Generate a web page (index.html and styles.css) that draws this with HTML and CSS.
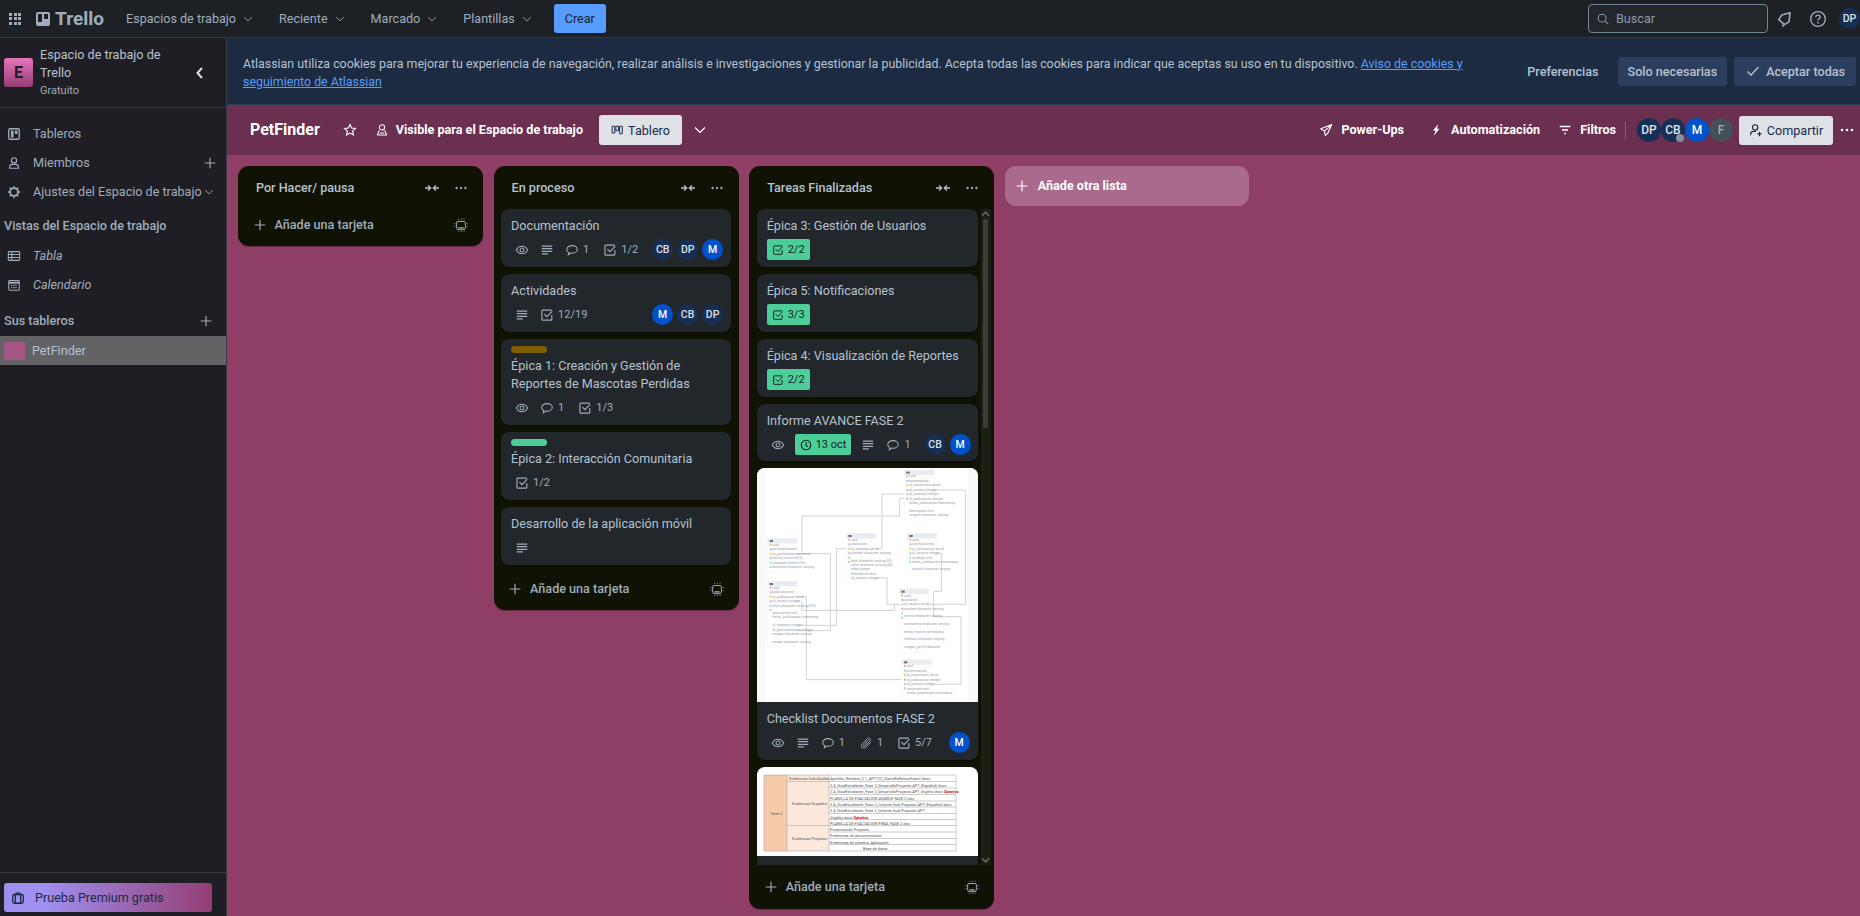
FILE: index.html
```html
<!DOCTYPE html>
<html lang="es">
    <head>
        <title>PetFinder | Trello</title>
        <link rel="stylesheet" href="styles.css">
    </head>
    <body>
        <svg class="icon-defs" width="0" height="0">
            <symbol id="i-chev" viewBox="0 0 16 16"><path d="M3 5.5l5 5 5-5" fill="none" stroke="currentColor" stroke-width="1.2"/></symbol>
            <symbol id="i-plus" viewBox="0 0 16 16"><path d="M8 2v12M2 8h12" fill="none" stroke="currentColor" stroke-width="1.3"/></symbol>
            <symbol id="i-dots" viewBox="0 0 16 16"><circle cx="3" cy="8" r="1.3" fill="currentColor"/><circle cx="8" cy="8" r="1.3" fill="currentColor"/><circle cx="13" cy="8" r="1.3" fill="currentColor"/></symbol>
            <symbol id="i-collapse" viewBox="0 0 16 16"><path d="M0 8h6M3.5 5l3 3-3 3M16 8h-6M12.5 5l-3 3 3 3" fill="none" stroke="currentColor" stroke-width="1.5"/></symbol>
            <symbol id="i-template" viewBox="0 0 16 16"><rect x="3" y="4" width="10" height="9" rx="1.5" fill="none" stroke="currentColor" stroke-width="1.1"/><path d="M5 10.5h6v1.500H5z" fill="currentColor"/><path d="M1 6v1M1 9v1M15 6v1M15 9v1M5 1.500h1M8 1.500h1M11 1.500h1M5 15h1M8 15h1M11 15h1" fill="none" stroke="currentColor" stroke-width="1.200"/></symbol>
            <symbol id="i-eye" viewBox="0 0 16 16"><path d="M1.5 8C3 5.2 5.3 3.8 8 3.8s5 1.4 6.5 4.2c-1.5 2.8-3.8 4.2-6.5 4.2S3 10.800 1.500 8z" fill="none" stroke="currentColor" stroke-width="1.200"/><circle cx="8" cy="8" r="2.200" fill="none" stroke="currentColor" stroke-width="1.200"/></symbol>
            <symbol id="i-desc" viewBox="0 0 16 16"><path d="M2 3.500h12M2 6.500h12M2 9.500h12M2 12.500h7" fill="none" stroke="currentColor" stroke-width="1.400"/></symbol>
            <symbol id="i-comment" viewBox="0 0 16 16"><path d="M8 3c3.500 0 6 1.900 6 4.300s-2.500 4.300-6 4.300c-.6 0-1.100 0-1.600-.1L3.800 13.500l.4-2.800C2.800 9.900 2 8.700 2 7.300 2 4.900 4.500 3 8 3z" fill="none" stroke="currentColor" stroke-width="1.200"/></symbol>
            <symbol id="i-check" viewBox="0 0 16 16"><path d="M13.500 8v5a.8.8 0 0 1-.8.8H3a.8.8 0 0 1-.8-.8V3.300a.8.8 0 0 1 .8-.8h10.500" fill="none" stroke="currentColor" stroke-width="1.300"/><path d="M5 7l3 3 6-6.500" fill="none" stroke="currentColor" stroke-width="1.300"/></symbol>
            <symbol id="i-clock" viewBox="0 0 16 16"><circle cx="8" cy="8" r="6.300" fill="none" stroke="currentColor" stroke-width="1.500"/><path d="M8 4v4.500l2.500 2" fill="none" stroke="currentColor" stroke-width="1.500"/></symbol>
            <symbol id="i-clip" viewBox="0 0 16 16"><path d="M13.500 7l-5.800 5.800c-1.400 1.400-3.300 1.300-4.300.3s-1-2.800.4-4.200l5.700-5.700c1-1 2.300-.9 3-.2s.7 2-.3 3L6.800 11.300c-.5.500-1.200.5-1.500.2s-.3-1 .2-1.500L10.800 4.600" fill="none" stroke="currentColor" stroke-width="1.100"/></symbol>
            <symbol id="i-rocket" viewBox="0 0 16 16"><path d="M14.500 1.800L2 6.500l4.200 2.800 1 4.900 2.800-2.400z M14.500 1.800l-8.300 7.500" fill="none" stroke="currentColor" stroke-width="1.300" stroke-linejoin="round"/></symbol>
            <symbol id="i-bolt" viewBox="0 0 16 16"><path d="M10.500 1.500L4.500 8.500h3L5.500 14.500l6.500-8H9z" fill="currentColor"/></symbol>
            <symbol id="i-filter" viewBox="0 0 16 16"><path d="M2 4h12M4.500 8h7M7 12h2" fill="none" stroke="currentColor" stroke-width="1.500"/></symbol>
            <symbol id="i-person" viewBox="0 0 16 16"><circle cx="8" cy="5" r="3" fill="none" stroke="currentColor" stroke-width="1.300"/><path d="M3 14v-1.500C3 10.600 4.500 9.500 6 9.500h4c1.500 0 3 1.100 3 3V14z" fill="none" stroke="currentColor" stroke-width="1.300"/></symbol>
            <symbol id="i-people" viewBox="0 0 16 16"><circle cx="8" cy="5" r="3" fill="none" stroke="currentColor" stroke-width="1.200"/><path d="M2.500 13.800L5 8.500M13.500 13.800L11 8.500M2.500 13.800h11M5.500 11.500h5" fill="none" stroke="currentColor" stroke-width="1.200"/></symbol>
            <defs>
                <g id="er-keys">
                    <rect x="6" y="8" width="10" height="6" fill="#6b7079"/>
                    <rect x="6" y="19" width="5" height="6" fill="#f2a5a0"/>
                    <rect x="6" y="33" width="7" height="6" fill="#a5cdf2"/>
                    <rect x="6" y="46" width="6" height="6" fill="#f2cf5b"/>
                    <rect x="6" y="60" width="6" height="6" fill="#b8bcc2"/>
                    <rect x="6" y="73" width="5" height="6" fill="#8fdcc0"/>
                    <rect x="6" y="86" width="5" height="6" fill="#8fdcc0"/>
                    <path d="M2 27H86M2 41H86M2 54H86M2 68H86M2 81H86" stroke="#eef0f2" stroke-width="1.500"/>
                </g>
            </defs>
        </svg>

        <header class="topbar">
            <span class="apps-grid"><i></i><i></i><i></i><i></i><i></i><i></i><i></i><i></i><i></i></span>
            <span class="logo"><span class="logo-mark"><i></i><i></i></span>Trello</span>
            <nav class="topnav">
                <a class="topnav-item">Espacios de trabajo <svg class="ic-12"><use href="#i-chev"/></svg></a>
                <a class="topnav-item">Reciente <svg class="ic-12"><use href="#i-chev"/></svg></a>
                <a class="topnav-item">Marcado <svg class="ic-12"><use href="#i-chev"/></svg></a>
                <a class="topnav-item">Plantillas <svg class="ic-12"><use href="#i-chev"/></svg></a>
            </nav>
            <button class="create-btn">Crear</button>
            <div class="search">
                <svg class="ic-14" viewBox="0 0 16 16"><circle cx="7" cy="7" r="4.500" fill="none" stroke="currentColor" stroke-width="1.200"/><path d="M10.500 10.500L14 14" stroke="currentColor" stroke-width="1.200"/></svg>
                <span>Buscar</span>
            </div>
            <svg class="top-icon bell" viewBox="0 0 16 16"><path d="M12.500 2.500L5 4.500 2.500 8.500l5 4.500 4-2.500z" fill="none" stroke="currentColor" stroke-width="1.400" stroke-linejoin="round"/><path d="M5.500 13.500l1.500 1" stroke="currentColor" stroke-width="1.400"/></svg>
            <svg class="top-icon help" viewBox="0 0 16 16"><circle cx="8" cy="8" r="6.500" fill="none" stroke="currentColor" stroke-width="1.200"/><path d="M6 6.300C6 5 7 4.500 8 4.500s2 .6 2 1.800c0 1.500-2 1.500-2 3" fill="none" stroke="currentColor" stroke-width="1.200"/><circle cx="8" cy="11.300" r=".8" fill="currentColor"/></svg>
            <span class="avatar avatar-top navy">DP</span>
        </header>

        <div class="main">
            <aside class="sidebar">
                <div class="ws-head">
                    <span class="ws-tile">E</span>
                    <div class="ws-info">
                        <div class="ws-name">Espacio de trabajo de Trello</div>
                        <div class="ws-plan">Gratuito</div>
                    </div>
                    <svg class="ws-back" viewBox="0 0 16 16"><path d="M10 3L5.500 8l4.500 5" fill="none" stroke="currentColor" stroke-width="2"/></svg>
                </div>
                <div class="side-nav">
                    <div class="side-row">
                        <svg class="ic-14" viewBox="0 0 16 16"><rect x="2" y="2" width="12" height="12" rx="1.500" fill="none" stroke="currentColor" stroke-width="1.500"/><path d="M4.500 4h3v8h-3zM9 4h3v4H9z" fill="currentColor"/></svg>
                        <span>Tableros</span>
                    </div>
                    <div class="side-row">
                        <svg class="ic-14"><use href="#i-person"/></svg>
                        <span>Miembros</span>
                        <svg class="ic-14 side-end"><use href="#i-plus"/></svg>
                    </div>
                    <div class="side-row">
                        <svg class="ic-14" viewBox="0 0 16 16"><circle cx="8" cy="8" r="4.500" fill="none" stroke="currentColor" stroke-width="2"/><path d="M8 1v2M8 13v2M1 8h2M13 8h2M3 3l1.500 1.500M13 13l-1.500-1.500M13 3l-1.500 1.500M3 13l1.500-1.500" stroke="currentColor" stroke-width="1.500"/></svg>
                        <span class="side-nowrap">Ajustes del Espacio de trabajo</span>
                        <svg class="ic-12 side-end-tight"><use href="#i-chev"/></svg>
                    </div>
                </div>
                <div class="side-title views-title">Vistas del Espacio de trabajo</div>
                <div class="side-row side-em">
                    <svg class="ic-14" viewBox="0 0 16 16"><rect x="1.500" y="3" width="13" height="10" rx="1" fill="none" stroke="currentColor" stroke-width="1.200"/><path d="M1.500 6.300h13M1.500 9.600h13M5.500 3v10" stroke="currentColor" stroke-width="1.200"/></svg>
                    <span>Tabla</span>
                </div>
                <div class="side-row side-em">
                    <svg class="ic-14" viewBox="0 0 16 16"><rect x="2" y="3" width="12" height="11" rx="1" fill="none" stroke="currentColor" stroke-width="1.200"/><path d="M2 5.500h12" stroke="currentColor" stroke-width="2"/><path d="M4.500 8.500h7M4.500 11h7" stroke="currentColor" stroke-width="1.500" stroke-dasharray="1.500 1"/></svg>
                    <span>Calendario</span>
                </div>
                <div class="side-title boards-title">
                    <span>Sus tableros</span>
                    <svg class="ic-14"><use href="#i-plus"/></svg>
                </div>
                <div class="board-row">
                    <span class="board-swatch"></span>
                    <span>PetFinder</span>
                </div>
                <div class="side-foot">
                    <button class="premium-btn">
                        <svg class="ic-14" viewBox="0 0 16 16"><rect x="2" y="4" width="12" height="10" rx="2" fill="none" stroke="currentColor" stroke-width="1.500"/><path d="M5 4v10M11 4v10M6 4V2.500h4V4" fill="none" stroke="currentColor" stroke-width="1.500"/></svg>
                        <span>Prueba Premium gratis</span>
                    </button>
                </div>
            </aside>

            <div class="content">
                <section class="cookie-banner">
                    <p class="cookie-text">Atlassian utiliza cookies para mejorar tu experiencia de navegación, realizar análisis e investigaciones y gestionar la publicidad. Acepta todas las cookies para indicar que aceptas su uso en tu dispositivo. <a>Aviso de cookies y seguimiento de Atlassian</a></p>
                    <button class="cookie-btn cookie-plain">Preferencias</button>
                    <button class="cookie-btn">Solo necesarias</button>
                    <button class="cookie-btn cookie-accept">
                        <svg class="ic-16" viewBox="0 0 16 16"><path d="M2.500 8.500l3.500 3.500 7.500-8" fill="none" stroke="currentColor" stroke-width="1.300"/></svg>
                        Aceptar todas
                    </button>
                </section>

                <section class="board-bar">
                    <h1 class="board-name">PetFinder</h1>
                    <svg class="ic-14 board-star" viewBox="0 0 16 16"><path d="M8 1.800l1.900 4 4.300.5-3.200 3 .9 4.300L8 11.500l-3.900 2.100.9-4.300-3.200-3 4.300-.5z" fill="none" stroke="currentColor" stroke-width="1.300"/></svg>
                    <span class="bar-item visible-item"><svg class="ic-14"><use href="#i-people"/></svg>Visible para el Espacio de trabajo</span>
                    <button class="view-btn">
                        <svg class="ic-12" viewBox="0 0 16 16"><path d="M1.500 3h3.500v9H1.500zM6.500 3H10v6H6.500zM11.500 3H15v10h-3.500z" fill="none" stroke="currentColor" stroke-width="1.300"/></svg>
                        Tablero
                    </button>
                    <svg class="ic-16 view-chev"><use href="#i-chev"/></svg>
                    <span class="bar-spacer"></span>
                    <span class="bar-item"><svg class="ic-14"><use href="#i-rocket"/></svg>Power-Ups</span>
                    <span class="bar-item auto-item"><svg class="ic-14"><use href="#i-bolt"/></svg>Automatización</span>
                    <span class="bar-item"><svg class="ic-14"><use href="#i-filter"/></svg>Filtros</span>
                    <span class="bar-divider"></span>
                    <div class="bar-members">
                        <span class="avatar avatar-bar navy">DP</span>
                        <span class="avatar avatar-bar navy">CB<i class="avatar-badge"></i></span>
                        <span class="avatar avatar-bar blue">M</span>
                        <span class="avatar avatar-bar grey">F</span>
                    </div>
                    <button class="share-btn">
                        <svg class="ic-14" viewBox="0 0 16 16"><circle cx="7" cy="5" r="3" fill="none" stroke="currentColor" stroke-width="1.300"/><path d="M2 14v-1.500c0-2 1.500-3 3-3h3M12 10v5M9.500 12.500h5" fill="none" stroke="currentColor" stroke-width="1.300"/></svg>
                        Compartir
                    </button>
                    <svg class="ic-16 bar-dots"><use href="#i-dots"/></svg>
                </section>

                <section class="canvas">
                    <div class="list">
                        <div class="list-head">
                            <span class="list-title">Por Hacer/ pausa</span>
                            <svg class="ic-14"><use href="#i-collapse"/></svg>
                            <svg class="ic-14 list-dots"><use href="#i-dots"/></svg>
                        </div>
                        <div class="add-row">
                            <svg class="ic-14"><use href="#i-plus"/></svg>
                            <span>Añade una tarjeta</span>
                            <svg class="ic-14 add-template"><use href="#i-template"/></svg>
                        </div>
                    </div>

                    <div class="list">
                        <div class="list-head">
                            <span class="list-title">En proceso</span>
                            <svg class="ic-14"><use href="#i-collapse"/></svg>
                            <svg class="ic-14 list-dots"><use href="#i-dots"/></svg>
                        </div>
                        <div class="cards">
                            <article class="card">
                                <div class="card-title">Documentación</div>
                                <div class="badges">
                                    <span class="badge"><svg class="ic-14"><use href="#i-eye"/></svg></span>
                                    <span class="badge"><svg class="ic-14"><use href="#i-desc"/></svg></span>
                                    <span class="badge badge-num"><svg class="ic-14"><use href="#i-comment"/></svg>1</span>
                                    <span class="badge badge-num"><svg class="ic-14"><use href="#i-check"/></svg>1/2</span>
                                    <div class="members">
                                        <span class="avatar navy">CB</span><span class="avatar navy">DP</span><span class="avatar blue">M</span>
                                    </div>
                                </div>
                            </article>
                            <article class="card">
                                <div class="card-title">Actividades</div>
                                <div class="badges">
                                    <span class="badge"><svg class="ic-14"><use href="#i-desc"/></svg></span>
                                    <span class="badge badge-num"><svg class="ic-14"><use href="#i-check"/></svg>12/19</span>
                                    <div class="members">
                                        <span class="avatar blue">M</span><span class="avatar navy">CB</span><span class="avatar navy">DP</span>
                                    </div>
                                </div>
                            </article>
                            <article class="card">
                                <span class="label label-yellow"></span>
                                <div class="card-title">Épica 1: Creación y Gestión de Reportes de Mascotas Perdidas</div>
                                <div class="badges">
                                    <span class="badge"><svg class="ic-14"><use href="#i-eye"/></svg></span>
                                    <span class="badge badge-num"><svg class="ic-14"><use href="#i-comment"/></svg>1</span>
                                    <span class="badge badge-num"><svg class="ic-14"><use href="#i-check"/></svg>1/3</span>
                                </div>
                            </article>
                            <article class="card">
                                <span class="label label-green"></span>
                                <div class="card-title">Épica 2: Interacción Comunitaria</div>
                                <div class="badges">
                                    <span class="badge badge-num"><svg class="ic-14"><use href="#i-check"/></svg>1/2</span>
                                </div>
                            </article>
                            <article class="card">
                                <div class="card-title">Desarrollo de la aplicación móvil</div>
                                <div class="badges">
                                    <span class="badge"><svg class="ic-14"><use href="#i-desc"/></svg></span>
                                </div>
                            </article>
                        </div>
                        <div class="add-row">
                            <svg class="ic-14"><use href="#i-plus"/></svg>
                            <span>Añade una tarjeta</span>
                            <svg class="ic-14 add-template"><use href="#i-template"/></svg>
                        </div>
                    </div>

                    <div class="list list-tall">
                        <div class="list-head">
                            <span class="list-title">Tareas Finalizadas</span>
                            <svg class="ic-14"><use href="#i-collapse"/></svg>
                            <svg class="ic-14 list-dots"><use href="#i-dots"/></svg>
                        </div>
                        <div class="scroll-wrap">
                            <div class="cards cards-scroll">
                                <article class="card">
                                    <div class="card-title">Épica 3: Gestión de Usuarios</div>
                                    <div class="badges badges-done">
                                        <span class="badge badge-done"><svg class="ic-14"><use href="#i-check"/></svg>2/2</span>
                                    </div>
                                </article>
                                <article class="card">
                                    <div class="card-title">Épica 5: Notificaciones</div>
                                    <div class="badges badges-done">
                                        <span class="badge badge-done"><svg class="ic-14"><use href="#i-check"/></svg>3/3</span>
                                    </div>
                                </article>
                                <article class="card">
                                    <div class="card-title">Épica 4: Visualización de Reportes</div>
                                    <div class="badges badges-done">
                                        <span class="badge badge-done"><svg class="ic-14"><use href="#i-check"/></svg>2/2</span>
                                    </div>
                                </article>
                                <article class="card card-tight">
                                    <div class="card-title">Informe AVANCE FASE 2</div>
                                    <div class="badges">
                                        <span class="badge"><svg class="ic-14"><use href="#i-eye"/></svg></span>
                                        <span class="badge badge-done badge-date"><svg class="ic-14"><use href="#i-clock"/></svg>13 oct</span>
                                        <span class="badge"><svg class="ic-14"><use href="#i-desc"/></svg></span>
                                        <span class="badge badge-num"><svg class="ic-14"><use href="#i-comment"/></svg>1</span>
                                        <div class="members">
                                            <span class="avatar navy">CB</span><span class="avatar blue">M</span>
                                        </div>
                                    </div>
                                </article>
                                <article class="card card-cover">
                                    <svg class="cover cover-er" viewBox="18 24 663 702">
                                        <rect x="18" y="24" width="663" height="702" fill="#f8f9fa"/>
                                        <rect x="44" y="24" width="606" height="702" fill="#fff"/>
                                        <g class="er-links">
                                            <path d="M549 90H643V433H533"/>
                                            <path d="M138 281H153V168H446V115H460"/>
                                            <path d="M375 266H393V102H460"/>
                                            <path d="M138 281H238V512H138"/>
                                            <path d="M138 496H256V266H286"/>
                                            <path d="M138 424H153V451H430V433H445"/>
                                            <path d="M375 354H408V433H445"/>
                                            <path d="M557 280H571V394H548V470H630V673H541"/>
                                            <path d="M138 410H166V659H453"/>
                                        </g>
                                        <g class="er-table">
                                            <rect x="460" y="30" width="89" height="150"/><rect class="er-head" x="460" y="30" width="89" height="15"/>
                                            <use href="#er-keys" x="460" y="27"/>
                                            <text x="474" y="52">uuid</text><text x="474" y="66">comentarios</text><text x="474" y="79">id_comentario serial</text><text x="474" y="93">id_usuario integer</text><text x="474" y="106">id_mascota integer</text><text x="474" y="119">id_publicacion integer</text><text x="474" y="132">fecha_publicacion timestamp</text><text x="474" y="155">descripcion text</text><text x="474" y="168">imagen character varying</text>
                                        </g>
                                        <g class="er-table">
                                            <rect x="286" y="220" width="89" height="140"/><rect class="er-head" x="286" y="220" width="89" height="15"/>
                                            <use href="#er-keys" x="286" y="217"/>
                                            <text x="300" y="242">uuid</text><text x="300" y="256">mascotas</text><text x="300" y="269">id_mascota serial</text><text x="300" y="282">nombre character varying</text><text x="300" y="305">raza character varying(50)</text><text x="300" y="318">color character varying(50)</text><text x="300" y="331">edad integer</text><text x="300" y="344">descripcion text</text><text x="300" y="357">id_usuario integer</text>
                                        </g>
                                        <g class="er-table">
                                            <rect x="469" y="220" width="88" height="125"/><rect class="er-head" x="469" y="220" width="88" height="15"/>
                                            <use href="#er-keys" x="469" y="217"/>
                                            <text x="483" y="242">uuid</text><text x="483" y="256">notificaciones</text><text x="483" y="269">id_notificacion serial</text><text x="483" y="283">id_usuario integer</text><text x="483" y="296">mensaje text</text><text x="483" y="309">fecha_publicacion timestamp</text><text x="483" y="331">estado character varying</text>
                                        </g>
                                        <g class="er-table">
                                            <rect x="50" y="235" width="88" height="100"/><rect class="er-head" x="50" y="235" width="88" height="15"/>
                                            <use href="#er-keys" x="50" y="232"/>
                                            <text x="64" y="257">uuid</text><text x="64" y="271">geolocalizacion</text><text x="64" y="284">id_geolocalizacion serial</text><text x="64" y="298">latitud numeric(9,6)</text><text x="64" y="311">longitud numeric(9,6)</text><text x="64" y="324">direccion character varying</text>
                                        </g>
                                        <g class="er-table">
                                            <rect x="50" y="364" width="88" height="196"/><rect class="er-head" x="50" y="364" width="88" height="15"/>
                                            <use href="#er-keys" x="50" y="361"/>
                                            <text x="64" y="387">uuid</text><text x="64" y="400">publicaciones</text><text x="64" y="413">id_publicacion serial</text><text x="64" y="427">id_usuario integer</text><text x="64" y="440">titulo character varying(150)</text><text x="64" y="463">descripcion text</text><text x="64" y="475">fecha_publicacion timestamp</text><text x="64" y="499">id_mascota integer</text><text x="64" y="512">id_geolocalizacion integer</text><text x="64" y="525">imagen character varying</text><text x="64" y="548">estado character varying</text>
                                        </g>
                                        <g class="er-table">
                                            <rect x="445" y="387" width="88" height="190"/><rect class="er-head" x="445" y="387" width="88" height="15"/>
                                            <use href="#er-keys" x="445" y="384"/>
                                            <text x="459" y="410">uuid</text><text x="459" y="423">usuarios</text><text x="459" y="436">id_usuario serial</text><text x="459" y="449">nombre character varying</text><text x="459" y="472">correo character varying</text><text x="459" y="495">contrasena character varying</text><text x="459" y="518">fecha_registro timestamp</text><text x="459" y="541">telefono character varying</text><text x="459" y="563">imagen_perfil character</text>
                                        </g>
                                        <g class="er-table">
                                            <rect x="453" y="599" width="88" height="116"/><rect class="er-head" x="453" y="599" width="88" height="15"/>
                                            <use href="#er-keys" x="453" y="596"/>
                                            <text x="467" y="622">uuid</text><text x="467" y="636">comentarios</text><text x="467" y="649">id_comentario serial</text><text x="467" y="662">id_publicacion integer</text><text x="467" y="676">id_usuario integer</text><text x="467" y="689">contenido text</text><text x="467" y="702">fecha_comentario timestamp</text>
                                        </g>
                                    </svg>
                                    <div class="card-body">
                                        <div class="card-title">Checklist Documentos FASE 2</div>
                                        <div class="badges">
                                            <span class="badge"><svg class="ic-14"><use href="#i-eye"/></svg></span>
                                            <span class="badge"><svg class="ic-14"><use href="#i-desc"/></svg></span>
                                            <span class="badge badge-num"><svg class="ic-14"><use href="#i-comment"/></svg>1</span>
                                            <span class="badge badge-num"><svg class="ic-14"><use href="#i-clip"/></svg>1</span>
                                            <span class="badge badge-num"><svg class="ic-14"><use href="#i-check"/></svg>5/7</span>
                                            <div class="members">
                                                <span class="avatar blue">M</span>
                                            </div>
                                        </div>
                                    </div>
                                </article>
                                <article class="card card-cover card-last">
                                    <svg class="cover cover-table" viewBox="0 0 221 89">
                                        <rect class="tb-fase" x="7" y="8" width="23" height="76"/>
                                        <rect class="tb-group" x="30" y="8" width="42" height="6.500"/>
                                        <rect class="tb-group" x="30" y="14.500" width="42" height="44"/>
                                        <rect class="tb-group" x="30" y="58.500" width="42" height="25.500"/>
                                        <path class="tb-lines" d="M7 8H199V84H7zM30 8V84M72 8V84M30 14.500H199M72 21H199M72 27.500H199M72 34H199M72 40H199M72 46.500H199M72 52.500H199M30 58.500H199M72 65H199M72 71.500H199M72 77.500H199"/>
                                        <text x="14" y="47.500">Fase 2</text>
                                        <text x="32" y="13">Evidencias Individuales</text>
                                        <text x="35" y="38">Evidencias Grupales</text>
                                        <text x="35" y="73">Evidencias Proyecto</text>
                                        <text x="73" y="13">Apellido_Nombre_2.1_APT122_DiarioReflexionFase2.docx</text>
                                        <text x="73" y="19.500">2.4_GuiaEstudiante_Fase 2_DesarrolloProyecto APT (Español).docx</text>
                                        <text x="73" y="26">2.4_GuiaEstudiante_Fase 2_DesarrolloProyecto APT (Inglés).docx <tspan class="tb-red">Optativo</tspan></text>
                                        <text x="73" y="32.500">PLANILLA DE EVALUACION AVANCE FASE 2.xlsx</text>
                                        <text x="73" y="39">3.4_GuiaEstudiante_Fase 2_Informe final Proyecto APT (Español).docx</text>
                                        <text x="73" y="45">3.4_GuiaEstudiante_Fase 2_Informe final Proyecto APT</text>
                                        <text x="73" y="51.500">(Inglés).docx <tspan class="tb-red">Optativo</tspan></text>
                                        <text x="73" y="57.500">PLANILLA DE EVALUACION FINAL FASE 2.xlsx</text>
                                        <text x="73" y="64">Presentación Proyecto</text>
                                        <text x="73" y="70">Evidencias de documentación</text>
                                        <text x="73" y="76.500">Evidencias de sistema: Aplicación</text>
                                        <text x="106" y="82.500">Base de datos</text>
                                    </svg>
                                </article>
                            </div>
                            <div class="scrollbar">
                                <svg class="scroll-arrow" viewBox="0 0 10 8"><path d="M1 6l4-4 4 4" fill="none" stroke="currentColor" stroke-width="1.500"/></svg>
                                <div class="scroll-track"><div class="scroll-thumb"></div></div>
                                <svg class="scroll-arrow" viewBox="0 0 10 8"><path d="M1 2l4 4 4-4" fill="none" stroke="currentColor" stroke-width="1.500"/></svg>
                            </div>
                        </div>
                        <div class="add-row">
                            <svg class="ic-14"><use href="#i-plus"/></svg>
                            <span>Añade una tarjeta</span>
                            <svg class="ic-14 add-template"><use href="#i-template"/></svg>
                        </div>
                    </div>

                    <div class="add-list">
                        <svg class="ic-14"><use href="#i-plus"/></svg>
                        <span>Añade otra lista</span>
                    </div>
                </section>
            </div>
        </div>
    </body>
</html>
```

FILE: styles.css
```css
* {
    box-sizing: border-box;
}
html, body {
    margin: 0;
    height: 100%;
    overflow: hidden;
}
body {
    background-color: #1d2125;
    color: #b6c2cf;
    font-family: Roboto, "Noto Sans", sans-serif;
    font-size: 12.6px;
    line-height: 18px;
    display: flex;
    flex-direction: column;
}
button {
    font-family: inherit;
    font-size: inherit;
    border: none;
}
.icon-defs {
    position: absolute;
}
.ic-12, .ic-14, .ic-16 {
    flex: none;
}
.ic-12 {
    width: 12px;
    height: 12px;
}
.ic-14 {
    width: 14px;
    height: 14px;
}
.ic-16 {
    width: 16px;
    height: 16px;
}

/* top bar */
.topbar {
    height: 38px;
    flex: none;
    display: flex;
    align-items: center;
    padding-left: 9px;
    background-color: #1d2125;
    border-bottom: 1px solid #31383d;
    overflow: hidden;
}
.apps-grid {
    width: 12px;
    display: grid;
    grid-template-columns: repeat(3, 3px);
    gap: 1.5px;
}
.apps-grid i {
    width: 3px;
    height: 3px;
    background-color: #9fadbc;
}
.logo {
    display: flex;
    align-items: center;
    gap: 5px;
    margin-left: 15px;
    color: #9fadbc;
    font-size: 19px;
    font-weight: 700;
}
.logo-mark {
    width: 14px;
    height: 14px;
    display: flex;
    gap: 2px;
    padding: 2px;
    border-radius: 2px;
    background-color: #9fadbc;
}
.logo-mark i {
    width: 4px;
    height: 8px;
    background-color: #1d2125;
}
.logo-mark i + i {
    height: 5px;
}
.topnav {
    display: flex;
    margin-left: 22px;
}
.topnav-item {
    display: flex;
    align-items: center;
    gap: 6px;
    margin-right: 25px;
    color: #9fadbc;
}
.topnav-item:last-child {
    margin-right: 18px;
}
.create-btn {
    width: 52px;
    height: 29px;
    margin-left: 3px;
    border-radius: 3px;
    background-color: #579dff;
    color: #1d2125;
}
.search {
    width: 180px;
    height: 29px;
    margin-left: auto;
    display: flex;
    align-items: center;
    gap: 6px;
    padding-left: 7px;
    border: 1px solid #738496;
    border-radius: 4px;
    background-color: #22272b;
    color: #8c9bab;
}
.top-icon {
    width: 18px;
    height: 18px;
    flex: none;
    color: #9fadbc;
}
.bell {
    margin-left: 8px;
}
.help {
    margin-left: 15px;
}
.avatar-top {
    margin: 0 0 0 12px;
    flex: none;
}

/* shared avatar */
.avatar {
    width: 21px;
    height: 21px;
    flex: none;
    display: flex;
    align-items: center;
    justify-content: center;
    border-radius: 50%;
    color: #dfe1e6;
    font-size: 10.5px;
    font-weight: 500;
}
.navy {
    background-color: #172f55;
}
.blue {
    background-color: #0052cc;
    color: #fff;
}
.grey {
    background-color: #454f59;
    color: #9fadbc;
}

.main {
    flex: 1;
    min-height: 0;
    display: flex;
}

/* sidebar */
.sidebar {
    width: 227px;
    flex: none;
    display: flex;
    flex-direction: column;
    background-color: #1f1e24;
    border-right: 1px solid #3a3a42;
    color: #9fadbc;
}
.ws-head {
    height: 70px;
    flex: none;
    display: flex;
    align-items: center;
    padding-left: 4px;
    border-bottom: 1px solid #3a3a40;
}
.ws-tile {
    width: 29px;
    height: 29px;
    flex: none;
    display: flex;
    align-items: center;
    justify-content: center;
    border-radius: 3px;
    background: linear-gradient(#e774bb, #943d73);
    color: #1d2125;
    font-size: 16px;
    font-weight: 700;
}
.ws-info {
    width: 130px;
    margin-left: 7px;
    color: #b6c2cf;
}
.ws-plan {
    color: #9fadbc;
    font-size: 11px;
}
.ws-back {
    width: 16px;
    height: 16px;
    margin-left: 22px;
    color: #dfe1e6;
}
.side-nav {
    padding-top: 11px;
}
.side-row {
    height: 29px;
    display: flex;
    align-items: center;
    gap: 12px;
    padding: 0 7px;
}
.side-nowrap {
    white-space: nowrap;
}
.side-end {
    margin-left: auto;
    margin-right: 2px;
}
.side-end-tight {
    margin-left: -11px;
}
.side-em {
    font-style: italic;
}
.side-title {
    height: 20px;
    display: flex;
    align-items: center;
    padding: 0 4px;
    font-weight: 500;
    color: #9fadbc;
}
.views-title {
    margin: 10px 0 5px;
}
.boards-title {
    justify-content: space-between;
    margin-top: 12px;
    padding-right: 13px;
}
.board-row {
    height: 29px;
    margin-top: 5px;
    display: flex;
    align-items: center;
    gap: 7px;
    padding-left: 4px;
    background-color: #636366;
    color: #b6c2cf;
}
.board-swatch {
    width: 21px;
    height: 18px;
    border-radius: 2px;
    background-color: #a85688;
}
.side-foot {
    margin-top: auto;
    padding: 10px 14px 4px 4px;
    border-top: 1px solid #3a3a40;
}
.premium-btn {
    width: 100%;
    height: 29px;
    display: flex;
    align-items: center;
    gap: 10px;
    padding: 0 7px;
    border-radius: 3px;
    background: linear-gradient(90deg, #9f8fef 20%, #943d73);
    color: #1c2b41;
}

.content {
    flex: 1;
    min-width: 0;
    display: flex;
    flex-direction: column;
}

/* cookie banner */
.cookie-banner {
    height: 67px;
    flex: none;
    display: flex;
    align-items: center;
    padding: 0 4px 0 16px;
    background-color: #1c2b41;
    border-bottom: 1px solid #2c3e5d;
    color: #b6c2cf;
}
.cookie-text {
    width: 1240px;
    margin: 3px auto 0 0;
    font-size: 12.4px;
}
.cookie-text a {
    color: #579dff;
    text-decoration: underline;
}
.cookie-btn {
    height: 29px;
    display: flex;
    align-items: center;
    gap: 5px;
    margin-left: 7px;
    padding: 0 10px;
    border-radius: 3px;
    background-color: #2c3e5d;
    color: #b6c2cf;
    font-weight: 500;
}
.cookie-accept {
    padding: 0 11px;
}
.cookie-plain {
    margin-right: 2px;
    background: none;
}

/* board header */
.board-bar {
    height: 50px;
    flex: none;
    display: flex;
    align-items: center;
    padding-left: 23px;
    background-color: #6b2f4f;
    color: #fff;
}
.board-name {
    margin: 0;
    font-size: 16px;
    font-weight: 700;
}
.board-star {
    margin-left: 23px;
}
.bar-item {
    display: flex;
    align-items: center;
    gap: 8px;
    margin-left: 18px;
    font-weight: 700;
}
.auto-item {
    margin-left: 25px;
}
.visible-item {
    margin-right: 16px;
    gap: 7px;
}
.view-btn {
    width: 83px;
    height: 30px;
    display: flex;
    align-items: center;
    justify-content: center;
    gap: 5px;
    border-radius: 3px;
    background-color: #dfe1e6;
    color: #172b4d;
}
.view-chev {
    margin-left: 10px;
}
.bar-spacer {
    flex: 1;
}
.bar-divider {
    width: 1px;
    height: 17px;
    margin: 0 11px 0 9px;
    background-color: #8f5f79;
}
.bar-members {
    display: flex;
}
.avatar-bar {
    position: relative;
    width: 24px;
    height: 24px;
    font-size: 12px;
}
.avatar-badge {
    position: absolute;
    right: 1px;
    bottom: 0;
    width: 8px;
    height: 8px;
    border-radius: 50%;
    background-color: #8590a2;
}
.share-btn {
    width: 94px;
    height: 29px;
    margin-left: 6px;
    display: flex;
    align-items: center;
    justify-content: center;
    gap: 4px;
    border-radius: 3px;
    background-color: #dfe1e6;
    color: #172b4d;
}
.bar-dots {
    margin: 0 5px 0 6px;
}

/* board */
.canvas {
    flex: 1;
    min-height: 0;
    display: flex;
    align-items: flex-start;
    gap: 10.6px;
    padding: 11px 0 0 11px;
    background-color: #8f3f65;
}
.list {
    width: 245px;
    flex: none;
    padding: 0 7.500px 5px;
    border-radius: 11px;
    background-color: #101204;
    box-shadow: 0 1px 1px rgba(0, 0, 0, 0.3);
}
.list-tall {
    height: 743px;
    padding-right: 3px;
}
.list-head {
    height: 43px;
    display: flex;
    align-items: center;
    gap: 15px;
    padding: 0 7.500px 0 10.500px;
}
.list-tall .list-head {
    padding-right: 12px;
}
.list-title {
    flex: 1;
    color: #b6c2cf;
    font-weight: 500;
}
.list-dots {
    color: #9fadbc;
}
.cards {
    display: flex;
    flex-direction: column;
    gap: 7px;
    margin-bottom: 8px;
}
.scroll-wrap {
    height: 656px;
    display: flex;
    margin-bottom: 6px;
}
.cards-scroll {
    width: 221px;
    flex: none;
    margin-bottom: 0;
    overflow: hidden;
}
.scrollbar {
    width: 10px;
    margin-left: 3px;
    flex: none;
    display: flex;
    flex-direction: column;
    align-items: center;
    background-color: #1b1f14;
    color: #6b7068;
}
.scroll-arrow {
    width: 9px;
    height: 8px;
    flex: none;
    margin: 1px 0;
}
.scroll-track {
    width: 5px;
    flex: 1;
}
.scroll-thumb {
    height: 209px;
    border-radius: 2px;
    background-color: #3b3f38;
}
.card {
    flex: none;
    padding: 8px 8px 7px 10px;
    border-radius: 8px;
    background-color: #22272b;
    box-shadow: 0 1px 1px #0a0b05;
    color: #b6c2cf;
}
.card-tight {
    padding-bottom: 6px;
}
.card-cover {
    padding: 0;
    overflow: hidden;
}
.card-last {
    flex: 1;
    border-radius: 8px 8px 0 0;
}
.card-body {
    padding: 8px 8px 7px 10px;
}
.cover {
    display: block;
    width: 221px;
    background-color: #fff;
}
.cover-er {
    height: 234px;
}
.cover-table {
    height: 89px;
}
.label {
    display: block;
    width: 36px;
    height: 7px;
    margin: -1px 0 4px;
    border-radius: 4px;
}
.label-yellow {
    background-color: #7f5f01;
}
.label-green {
    background-color: #4bce97;
}
.badges {
    min-height: 21px;
    margin-top: 4px;
    display: flex;
    align-items: center;
    gap: 11px;
    padding-left: 4px;
    color: #9fadbc;
}
.badges-done {
    padding-left: 0;
}
.badge {
    display: flex;
    align-items: center;
    gap: 4px;
    font-size: 11px;
    white-space: nowrap;
}
.badge-num {
    margin-right: 3px;
}
.badge-done {
    height: 21px;
    padding: 0 5px;
    border-radius: 2px;
    background-color: #4bce97;
    color: #1d2125;
}
.badge-done svg {
    width: 12px;
    height: 12px;
}
.badge-date {
    margin: 0 -1px;
}
.members {
    margin-left: auto;
    display: flex;
    gap: 4px;
}
.add-row {
    height: 32px;
    display: flex;
    align-items: center;
    gap: 8px;
    padding: 0 7.500px 0 7px;
    color: #9fadbc;
    font-weight: 500;
}
.list-tall .add-row {
    padding-right: 12px;
}
.add-template {
    margin-left: auto;
}
.add-list {
    width: 244px;
    height: 40px;
    flex: none;
    display: flex;
    align-items: center;
    gap: 9px;
    padding-left: 10px;
    border-radius: 11px;
    background-color: #aa6a8b;
    color: #fff;
    font-weight: 700;
}

/* cover pictures */
.er-links path {
    fill: none;
    stroke: #d0d2d6;
    stroke-width: 3;
}
.er-table rect {
    fill: #fff;
    stroke: #eceef1;
}
.er-table .er-head {
    fill: #e9edf2;
}
.er-table text {
    fill: #9aa0a8;
    font-size: 10.500px;
}
.cover-table text {
    fill: #555;
    font-size: 3.900px;
}
.cover-table .tb-red {
    fill: #c8102e;
    font-weight: 700;
}
.tb-fase {
    fill: #f6c9a8;
}
.tb-group {
    fill: #fde9db;
}
.tb-lines {
    fill: none;
    stroke: #999;
    stroke-width: 0.500;
}
```
